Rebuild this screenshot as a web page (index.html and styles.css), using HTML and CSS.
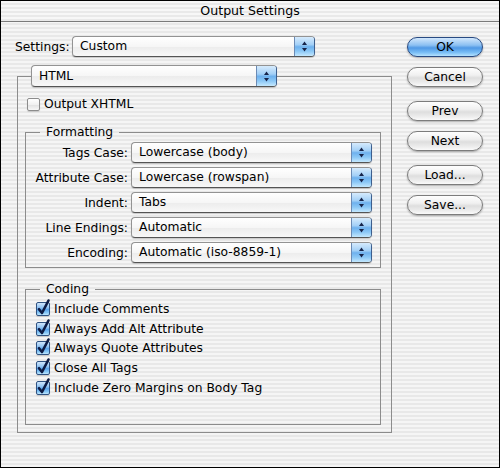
FILE: index.html
```html
<!DOCTYPE html>
<html>
<head>
<meta charset="utf-8">
<title>Output Settings</title>
<link rel="stylesheet" href="styles.css">
</head>
<body>
<div class="window">
  <div class="titlebar">Output Settings</div>
  <div class="content">
    <div class="main">
      <div class="settings-row">
        <span class="settings-label">Settings:</span>
        <div class="popup popup-settings">
          <span class="popup-text">Custom</span>
          <span class="arrows"><svg width="9" height="13" viewBox="0 0 9 13"><polygon points="2,5 7,5 4.5,1.5"/><polygon points="2,8 7,8 4.5,11.5"/></svg></span>
        </div>
      </div>

      <fieldset class="group outer">
        <legend class="legend-popup">
          <div class="popup popup-html">
            <span class="popup-text">HTML</span>
            <span class="arrows"><svg width="9" height="13" viewBox="0 0 9 13"><polygon points="2,5 7,5 4.5,1.5"/><polygon points="2,8 7,8 4.5,11.5"/></svg></span>
          </div>
        </legend>

        <div class="check-row xhtml"><span class="cb"></span><span>Output XHTML</span></div>

        <fieldset class="group inner formatting">
          <legend class="legend-text">Formatting</legend>
          <div class="form-grid">
            <span class="label">Tags Case:</span>
            <div class="popup"><span class="popup-text">Lowercase (body)</span><span class="arrows"><svg width="9" height="13" viewBox="0 0 9 13"><polygon points="2,5 7,5 4.5,1.5"/><polygon points="2,8 7,8 4.5,11.5"/></svg></span></div>
            <span class="label">Attribute Case:</span>
            <div class="popup"><span class="popup-text">Lowercase (rowspan)</span><span class="arrows"><svg width="9" height="13" viewBox="0 0 9 13"><polygon points="2,5 7,5 4.5,1.5"/><polygon points="2,8 7,8 4.5,11.5"/></svg></span></div>
            <span class="label">Indent:</span>
            <div class="popup"><span class="popup-text">Tabs</span><span class="arrows"><svg width="9" height="13" viewBox="0 0 9 13"><polygon points="2,5 7,5 4.5,1.5"/><polygon points="2,8 7,8 4.5,11.5"/></svg></span></div>
            <span class="label">Line Endings:</span>
            <div class="popup"><span class="popup-text">Automatic</span><span class="arrows"><svg width="9" height="13" viewBox="0 0 9 13"><polygon points="2,5 7,5 4.5,1.5"/><polygon points="2,8 7,8 4.5,11.5"/></svg></span></div>
            <span class="label">Encoding:</span>
            <div class="popup"><span class="popup-text">Automatic (iso-8859-1)</span><span class="arrows"><svg width="9" height="13" viewBox="0 0 9 13"><polygon points="2,5 7,5 4.5,1.5"/><polygon points="2,8 7,8 4.5,11.5"/></svg></span></div>
          </div>
        </fieldset>

        <fieldset class="group inner coding">
          <legend class="legend-text">Coding</legend>
          <div class="check-list">
            <div class="check-row"><span class="cb checked"><svg width="14" height="14" viewBox="0 0 14 14"><path d="M3 7.2 L6 11 L12.5 -1.5"/></svg></span><span>Include Comments</span></div>
            <div class="check-row"><span class="cb checked"><svg width="14" height="14" viewBox="0 0 14 14"><path d="M3 7.2 L6 11 L12.5 -1.5"/></svg></span><span>Always Add Alt Attribute</span></div>
            <div class="check-row"><span class="cb checked"><svg width="14" height="14" viewBox="0 0 14 14"><path d="M3 7.2 L6 11 L12.5 -1.5"/></svg></span><span>Always Quote Attributes</span></div>
            <div class="check-row"><span class="cb checked"><svg width="14" height="14" viewBox="0 0 14 14"><path d="M3 7.2 L6 11 L12.5 -1.5"/></svg></span><span>Close All Tags</span></div>
            <div class="check-row"><span class="cb checked"><svg width="14" height="14" viewBox="0 0 14 14"><path d="M3 7.2 L6 11 L12.5 -1.5"/></svg></span><span>Include Zero Margins on Body Tag</span></div>
          </div>
        </fieldset>
      </fieldset>
    </div>

    <div class="buttons">
      <div class="btn-group">
        <button class="btn default">OK</button>
        <button class="btn">Cancel</button>
      </div>
      <div class="btn-group">
        <button class="btn">Prev</button>
        <button class="btn">Next</button>
      </div>
      <div class="btn-group">
        <button class="btn">Load...</button>
        <button class="btn">Save...</button>
      </div>
    </div>
  </div>
</div>
</body>
</html>
```

FILE: styles.css
```css
* { box-sizing: border-box; }

html, body {
  margin: 0;
  padding: 0;
}

body {
  width: 500px;
  height: 468px;
  font-family: "Lucida Grande", "DejaVu Sans", sans-serif;
  font-size: 12.3px;
  color: #000;
}

.window {
  width: 500px;
  height: 468px;
  border: 1px solid #000;
  background: repeating-linear-gradient(to bottom, #f5f5f5 0 2px, #e8e8e8 2px 4px);
  overflow: hidden;
}

.titlebar {
  height: 21px;
  border-bottom: 1px solid #7a7a7a;
  text-align: center;
  line-height: 20px;
  font-size: 12.6px;
  background: repeating-linear-gradient(to bottom, #f7f7f7 0 2px, #e9e9e9 2px 4px);
}

.content {
  display: flex;
}

.main {
  width: 392px;
}

.settings-row {
  display: flex;
  align-items: center;
  height: 21px;
  margin: 14px 0 0 14px;
}

.settings-label {
  width: 57px;
}

/* popup menus */
.popup {
  display: flex;
  height: 21px;
  border: 1px solid #939393;
  border-bottom-color: #545454;
  border-right-color: #3d5f8e;
  border-radius: 4px;
  background: linear-gradient(to bottom, #ffffff 0%, #f6f6f6 50%, #ececec 52%, #f8f8f8 100%);
  box-shadow: 0 1px 1px rgba(0, 0, 0, 0.18);
  overflow: hidden;
}

.popup-settings { width: 243px; }
.popup-html { width: 246px; height: 22px; }

.popup-text {
  flex: 1;
  padding-left: 7px;
  line-height: 19px;
  white-space: nowrap;
}

.popup-html .popup-text { line-height: 20px; }

.arrows {
  width: 20px;
  display: flex;
  align-items: center;
  justify-content: center;
  border-left: 1px solid #6b8bb5;
  background: linear-gradient(to bottom, #d6ebfd 0%, #a3d0f7 40%, #6eb1ee 52%, #8cc8f6 75%, #c4e8fe 100%);
}

.arrows svg polygon { fill: #17244a; }

/* group boxes */
.group {
  margin: 0;
  padding: 0;
  border: 1px solid #8c8c8c;
  min-inline-size: 0;
}

.outer {
  width: 375px;
  margin: 8px 0 0 16px;
  padding: 0 0 7px 0;
}

.legend-popup {
  padding: 0;
  margin-left: 13px;
}

.legend-text {
  padding: 0 6px;
  margin-left: 14px;
  line-height: 14px;
}

.formatting {
  width: 356px;
  margin: 13px 0 0 7px;
  padding: 3px 0 4px 0;
}

.coding {
  width: 356px;
  margin: 14px 0 0 7px;
  padding: 3px 0 26px 0;
}

.form-grid {
  display: grid;
  grid-template-columns: 102px 241px;
  grid-auto-rows: 21px;
  column-gap: 3px;
  row-gap: 4px;
  align-items: center;
}

.form-grid .label {
  text-align: right;
  white-space: nowrap;
}

/* checkboxes */
.check-row {
  display: flex;
  align-items: center;
  gap: 4px;
  white-space: nowrap;
}

.xhtml {
  height: 16px;
  margin: 9px 0 0 9px;
}

.check-list .check-row {
  height: 19.75px;
  margin-left: 10px;
}

.cb {
  display: inline-block;
  width: 13px;
  height: 13px;
  border: 1px solid #8c8c8c;
  border-radius: 2px;
  background: linear-gradient(to bottom, #ffffff 0%, #f1f1f1 50%, #e2e2e2 55%, #f7f7f7 100%);
  box-shadow: 0 1px 1px rgba(0, 0, 0, 0.15);
}

.cb.checked {
  width: 14px;
  height: 14px;
  border-color: #2f5282;
  background: linear-gradient(to bottom, #cfe6fc 0%, #8fc2f3 40%, #5aa3ea 55%, #8dccf8 85%, #c3e8fe 100%);
}

.cb svg {
  display: block;
  overflow: visible;
  margin: -1px 0 0 -1px;
}

.cb svg path {
  fill: none;
  stroke: #0d1b44;
  stroke-width: 2.6;
  stroke-linecap: round;
  stroke-linejoin: round;
}

/* buttons */
.buttons {
  margin-left: 14px;
  padding-top: 15px;
  display: flex;
  flex-direction: column;
  gap: 14.5px;
}

.btn-group {
  display: flex;
  flex-direction: column;
  gap: 9.5px;
}

.btn {
  width: 76px;
  height: 20px;
  padding: 0;
  font: inherit;
  color: #000;
  text-align: center;
  line-height: 18px;
  border: 1px solid #7c7c7c;
  border-radius: 10px;
  background: linear-gradient(to bottom, #fefefe 0%, #f0f0f0 40%, #dedede 55%, #ececec 80%, #fafafa 100%);
  box-shadow: 0 1px 2px rgba(0, 0, 0, 0.3);
}

.btn.default {
  border-color: #284a82;
  background: linear-gradient(to bottom, #d2e7fc 0%, #8cc0f2 40%, #4f98e5 55%, #78bdf5 80%, #b4e2fe 100%);
}
```
